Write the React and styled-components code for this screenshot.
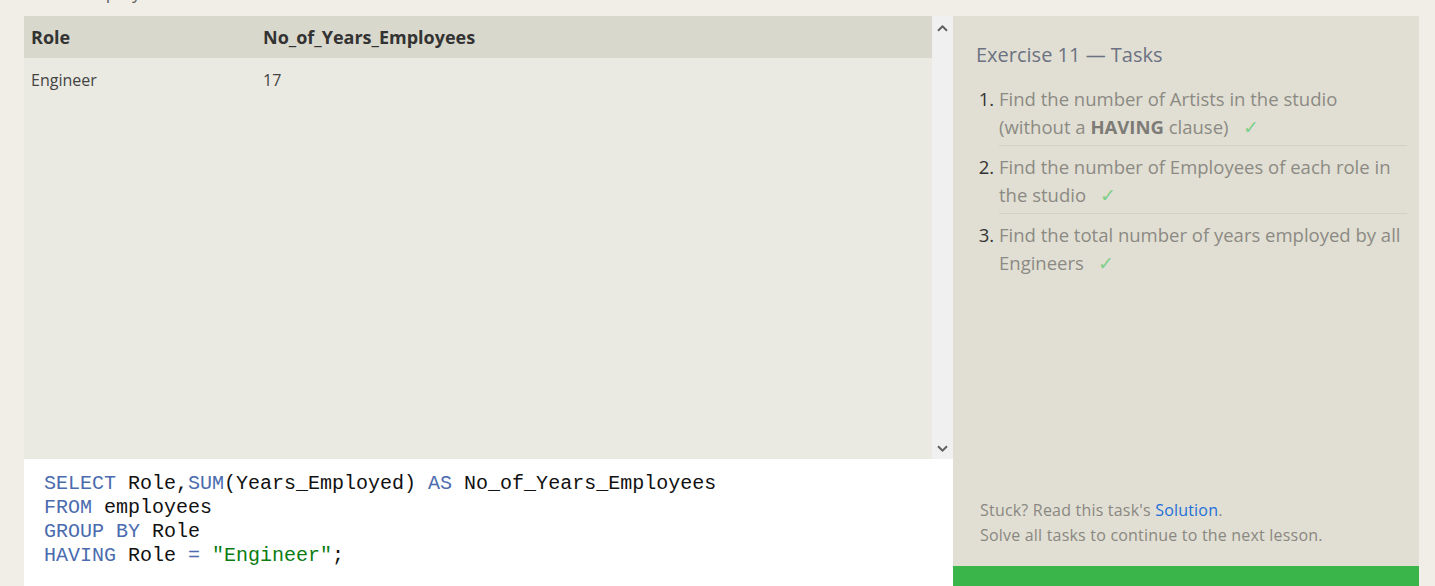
import React from 'react';
import styled, { createGlobalStyle } from 'styled-components';

const GlobalStyle = createGlobalStyle`
    html, body {
        margin: 0;
        padding: 0;
        background: #f0eee7;
        font-family: "Open Sans", "Liberation Sans", sans-serif;
        overflow: hidden;
    }
`

const tasks = [
    { id: 1, text: <>Find the number of Artists in the studio (without a <b>HAVING</b> clause)</> },
    { id: 2, text: <>Find the number of Employees of each role in the studio</> },
    { id: 3, text: <>Find the total number of years employed by all Engineers</> },
]

const Chevron = ({ down }) => (
    <svg width="11" height="7" viewBox="0 0 11 7">
        <path
            d={down ? 'M1 1.2 L5.5 5.6 L10 1.2' : 'M1 5.8 L5.5 1.4 L10 5.8'}
            fill="none"
            stroke="#5f5f5f"
            strokeWidth="2"
        />
    </svg>
)

export const App = () => {
    return (
        <Page>
            <GlobalStyle />
            <TopStrip>
                <CutTitle>Table: Employees</CutTitle>
            </TopStrip>
            <Main>
                <LeftColumn>
                    <Results>
                        <TableWrap>
                            <Table>
                                <thead>
                                    <tr>
                                        <Th $width={218}>Role</Th>
                                        <Th>No_of_Years_Employees</Th>
                                    </tr>
                                </thead>
                                <tbody>
                                    <tr>
                                        <Td>Engineer</Td>
                                        <Td>17</Td>
                                    </tr>
                                </tbody>
                            </Table>
                        </TableWrap>
                        <ScrollBar>
                            <Chevron />
                            <Chevron down />
                        </ScrollBar>
                    </Results>
                    <Editor>
                        <Line><Kw>SELECT</Kw> Role,<Kw>SUM</Kw>(Years_Employed) <Kw>AS</Kw> No_of_Years_Employees</Line>
                        <Line><Kw>FROM</Kw> employees</Line>
                        <Line><Kw>GROUP BY</Kw> Role</Line>
                        <Line><Kw>HAVING</Kw> Role <Kw>=</Kw> <Str>"Engineer"</Str>;</Line>
                    </Editor>
                </LeftColumn>

                <TaskPanel>
                    <TaskTitle>Exercise 11 — Tasks</TaskTitle>
                    <TaskList>
                        {tasks.map((task) => (
                            <Task key={task.id}>
                                {task.text}
                                <Check>✓</Check>
                            </Task>
                        ))}
                    </TaskList>
                    <Footer>
                        <FooterLine>Stuck? Read this task's <SolutionLink href="#">Solution</SolutionLink>.</FooterLine>
                        <FooterLine>Solve all tasks to continue to the next lesson.</FooterLine>
                    </Footer>
                    <ContinueBar />
                </TaskPanel>
            </Main>
        </Page>
    )
}

const Page = styled.div`
    width: 1435px;
    height: 586px;
    overflow: hidden;
`

const TopStrip = styled.div`
    height: 16px;
    overflow: hidden;
    padding-left: 24px;
`

const CutTitle = styled.div`
    font-size: 18px;
    line-height: 20px;
    margin-top: -18px;
    color: #666;
`

const Main = styled.div`
    display: flex;
    height: 570px;
    padding-left: 24px;
`

const LeftColumn = styled.div`
    width: 929px;
    display: flex;
    flex-direction: column;
`

const Results = styled.div`
    display: flex;
    height: 443px;
    background: #eae9e2;
`

const TableWrap = styled.div`
    flex: 1;
`

const Table = styled.table`
    width: 100%;
    border-collapse: collapse;
    color: #3a3a3a;
`

const Th = styled.th`
    width: ${(props) => (props.$width ? `${props.$width}px` : 'auto')};
    height: 42px;
    padding: 0 7px;
    background: #d9d8cc;
    text-align: left;
    font-size: 18px;
    font-weight: 700;
    color: #333;
`

const Td = styled.td`
    padding: 10px 7px 8px;
    font-size: 16px;
    line-height: 24px;
    color: #444;
`

const ScrollBar = styled.div`
    width: 21px;
    background: #f0f0f0;
    display: flex;
    flex-direction: column;
    justify-content: space-between;
    align-items: center;
    padding: 9px 0 7px;
    box-sizing: border-box;
`

const Editor = styled.div`
    flex: 1;
    background: #fff;
    padding: 13px 20px 0;
    font-family: "Liberation Mono", "DejaVu Sans Mono", monospace;
    font-size: 20px;
    line-height: 24px;
    color: #111;
`

const Line = styled.div`
    white-space: pre;
`

const Kw = styled.span`
    color: #4a6bae;
`

const Str = styled.span`
    color: #0b7d12;
`

const TaskPanel = styled.div`
    width: 466px;
    background: #e1dfd3;
    display: flex;
    flex-direction: column;
    box-sizing: border-box;
    padding: 25px 12px 0 23px;
`

const TaskTitle = styled.div`
    font-size: 20px;
    line-height: 28px;
    color: #6c7282;
`

const TaskList = styled.ol`
    margin: 16px 0 0;
    padding-left: 23px;
`

const Task = styled.li`
    font-size: 18.5px;
    line-height: 28px;
    color: #8c8a84;
    padding: 7px 0 4px;
    border-bottom: 1px solid #d4d2c6;
    &:first-child {
        padding-top: 0;
    }
    &:last-child {
        border-bottom: none;
    }
    &::marker {
        color: #333;
    }
    b {
        font-weight: 700;
        color: #7d7b76;
    }
`

const Check = styled.span`
    color: #7fcf8a;
    margin-left: 14px;
`

const Footer = styled.div`
    margin-top: auto;
    margin-bottom: 18px;
    padding-left: 4px;
`

const FooterLine = styled.div`
    font-size: 16px;
    line-height: 25px;
    color: #8a8782;
    letter-spacing: 0.2px;
`

const SolutionLink = styled.a`
    color: #1e6fd9;
    text-decoration: none;
`

const ContinueBar = styled.div`
    height: 20px;
    margin: 0 -12px 0 -23px;
    background: #3ab54a;
`

export default App
